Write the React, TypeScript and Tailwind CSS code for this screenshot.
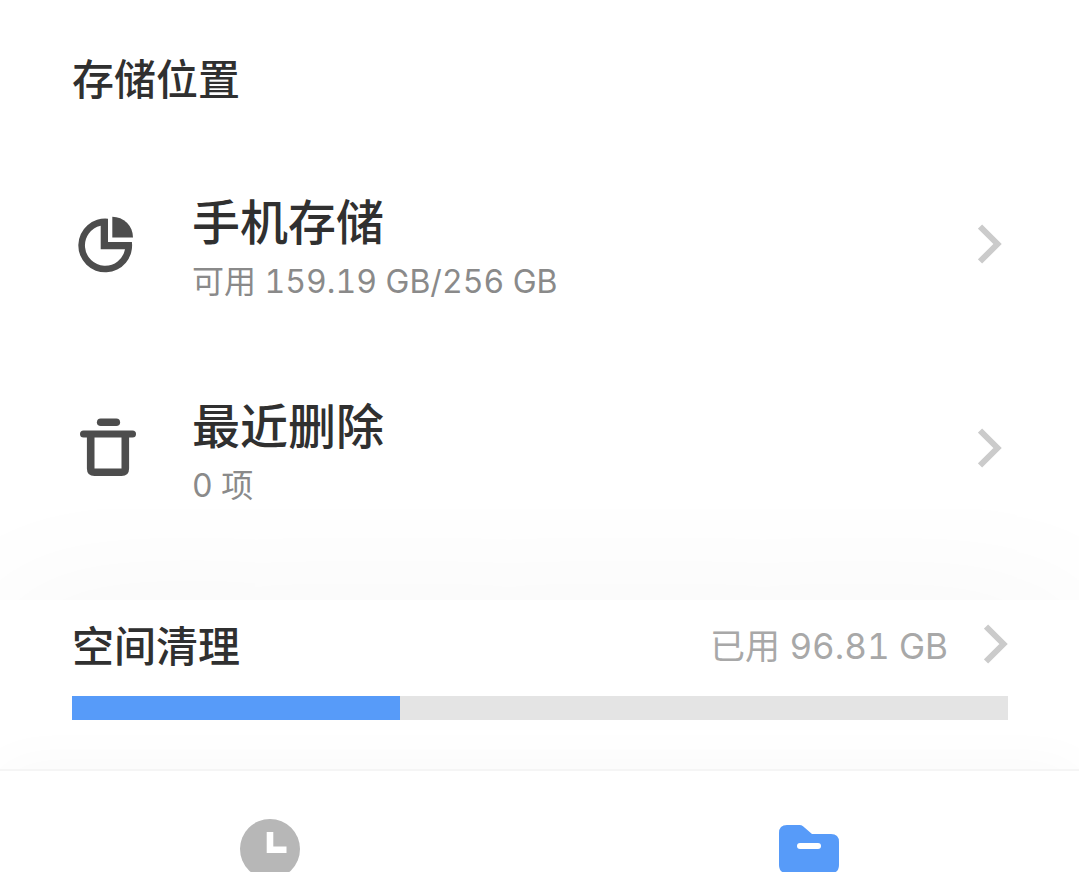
import React from "react";

interface IconProps {
  className?: string;
}

const ChevronIcon: React.FC<IconProps> = ({ className }) => (
  <svg
    viewBox="1 0 24 40"
    fill="none"
    stroke="#cbcbcb"
    strokeWidth="6"
    aria-hidden="true"
    className={`w-6 h-10 shrink-0 ${className ?? ""}`}
  >
    <path d="M3 2.5L20.5 20L3 37.5" />
  </svg>
);

const PieIcon: React.FC<IconProps> = ({ className }) => (
  <svg
    viewBox="0 0 60 60"
    fill="#4d4d4d"
    aria-hidden="true"
    className={`w-[60px] h-[60px] shrink-0 ${className ?? ""}`}
  >
    <path
      fillRule="evenodd"
      d="M30 4.7V28H53.9A26.9 26.9 0 1 1 30 4.7ZM22.7 11.8A20.2 20.2 0 1 0 47 35.3H22.7Z"
    />
    <path d="M34.3 2.7A20.6 20.6 0 0 1 55 23.4H34.3Z" />
  </svg>
);

const TrashIcon: React.FC<IconProps> = ({ className }) => (
  <svg
    viewBox="0 0 60 60"
    fill="none"
    stroke="#4d4d4d"
    strokeWidth="7"
    aria-hidden="true"
    className={`w-[60px] h-[60px] shrink-0 ${className ?? ""}`}
  >
    <path d="M22.7 4.2H38.3" strokeWidth="7.6" strokeLinecap="round" />
    <path d="M5.5 16H54.5" strokeLinecap="round" />
    <path
      d="M12.7 16V50.5Q12.7 54.3 16.5 54.3H43.5Q47.3 54.3 47.3 50.5V16"
      strokeWidth="7.6"
    />
  </svg>
);

const ClockIcon: React.FC<IconProps> = ({ className }) => (
  <svg
    viewBox="0 0 60 60"
    aria-hidden="true"
    className={`w-[60px] h-[60px] ${className ?? ""}`}
  >
    <circle cx="30" cy="30" r="30" fill="#b7b7b7" />
    <path d="M30 13V30.7H46.5" fill="none" stroke="#fff" strokeWidth="6.6" />
  </svg>
);

const FolderIcon: React.FC<IconProps> = ({ className }) => (
  <svg
    viewBox="0 0 60 60"
    aria-hidden="true"
    className={`w-[60px] h-[60px] ${className ?? ""}`}
  >
    <path
      fill="#579bf9"
      d="M8 6H20.5Q22.5 6 24 7.3L33 15H52Q60 15 60 23V46Q60 54 52 54H8Q0 54 0 46V14Q0 6 8 6Z"
    />
    <path d="M21 27H39" stroke="#fff" strokeWidth="6" strokeLinecap="round" />
  </svg>
);

interface StorageItemProps {
  icon: React.ReactNode;
  title: string;
  detail: string;
}

const StorageItem: React.FC<StorageItemProps> = ({ icon, title, detail }) => {
  return (
    <li>
      <button
        type="button"
        className="w-full h-[204px] flex items-center pl-[78px] pr-[77px] text-left"
      >
        {icon}
        <span className="flex-1 flex flex-col pt-3 pl-[54px]">
          <span className="text-[48px] leading-[64px] font-medium text-[#303030]">
            {title}
          </span>
          <span className="text-[32px] leading-[54px] tabular-nums text-[#8a8a8a]">
            {detail}
          </span>
        </span>
        <ChevronIcon />
      </button>
    </li>
  );
};

const usedPercent = 35;

export default function App() {
  return (
    <div className="h-screen overflow-hidden flex flex-col bg-white font-['Inter','Noto_Sans_CJK_SC',sans-serif]">
      <section className="pb-[50px]">
        <h2 className="px-[72px] pt-12 pb-[30px] text-[42px] leading-[64px] font-medium text-[#303030]">
          存储位置
        </h2>
        <ul>
          <StorageItem
            icon={<PieIcon />}
            title="手机存储"
            detail="可用 159.19 GB/256 GB"
          />
          <StorageItem icon={<TrashIcon />} title="最近删除" detail="0 项" />
        </ul>
      </section>

      <section className="relative bg-white pl-[72px] pr-[71px] pt-3 pb-[49px] shadow-[0_0_150px_rgba(0,0,0,0.04)]">
        <button
          type="button"
          className="w-full h-16 flex items-center text-left"
        >
          <span className="flex-1 pt-1 text-[42px] font-medium text-[#303030]">
            空间清理
          </span>
          <span className="pt-1 pr-9 text-[35px] tabular-nums text-[#a8a8a8]">
            已用 96.81 GB
          </span>
          <ChevronIcon />
        </button>
        <div
          role="progressbar"
          aria-label="空间清理"
          aria-valuenow={usedPercent}
          aria-valuemin={0}
          aria-valuemax={100}
          className="mt-5 h-6 bg-[#e4e4e4]"
        >
          <div
            className="h-full bg-[#579bf9]"
            style={{ width: `${usedPercent}%` }}
          />
        </div>
      </section>

      <nav className="relative flex-1 grid grid-cols-2 bg-white border-t-2 border-[#f5f5f5] shadow-[0_0_60px_rgba(0,0,0,0.03)]">
        <button
          type="button"
          aria-label="最近"
          className="flex justify-center items-start pt-12"
        >
          <ClockIcon />
        </button>
        <button
          type="button"
          aria-label="存储"
          aria-current="page"
          className="flex justify-center items-start pt-12"
        >
          <FolderIcon />
        </button>
      </nav>
    </div>
  );
}
